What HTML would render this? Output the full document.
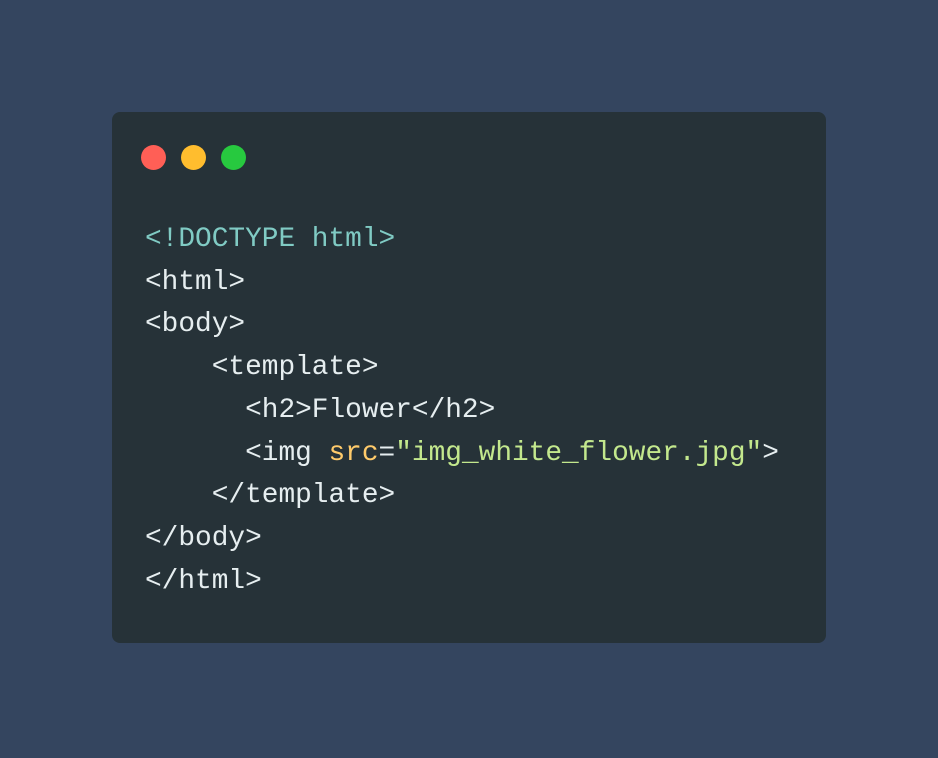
<!DOCTYPE html>
<html><head><style>
html,body{margin:0;padding:0;}
body{width:938px;height:758px;background:#34455f;position:relative;overflow:hidden;}
.card{position:absolute;left:112px;top:112px;width:714px;height:531px;background:#263238;border-radius:8px;}
.dot{position:absolute;top:145px;width:25px;height:25px;border-radius:50%;}
pre{position:absolute;left:145px;top:219px;margin:0;font-family:"Liberation Mono",monospace;font-size:27.8px;line-height:42.7px;color:#e6eef0;}
.t{color:#80cbc4}.a{color:#ffcb6b}.s{color:#c3e88d}
</style></head><body>
<div class="card"></div>
<div class="dot" style="left:141px;background:#ff5f56"></div>
<div class="dot" style="left:181px;background:#ffbd2e"></div>
<div class="dot" style="left:221px;background:#27c93f"></div>
<pre><span class="t">&lt;!DOCTYPE html&gt;</span>
&lt;html&gt;
&lt;body&gt;
    &lt;template&gt;
      &lt;h2&gt;Flower&lt;/h2&gt;
      &lt;img <span class="a">src</span>=<span class="s">"img_white_flower.jpg"</span>&gt;
    &lt;/template&gt;
&lt;/body&gt;
&lt;/html&gt;</pre>
</body></html>
